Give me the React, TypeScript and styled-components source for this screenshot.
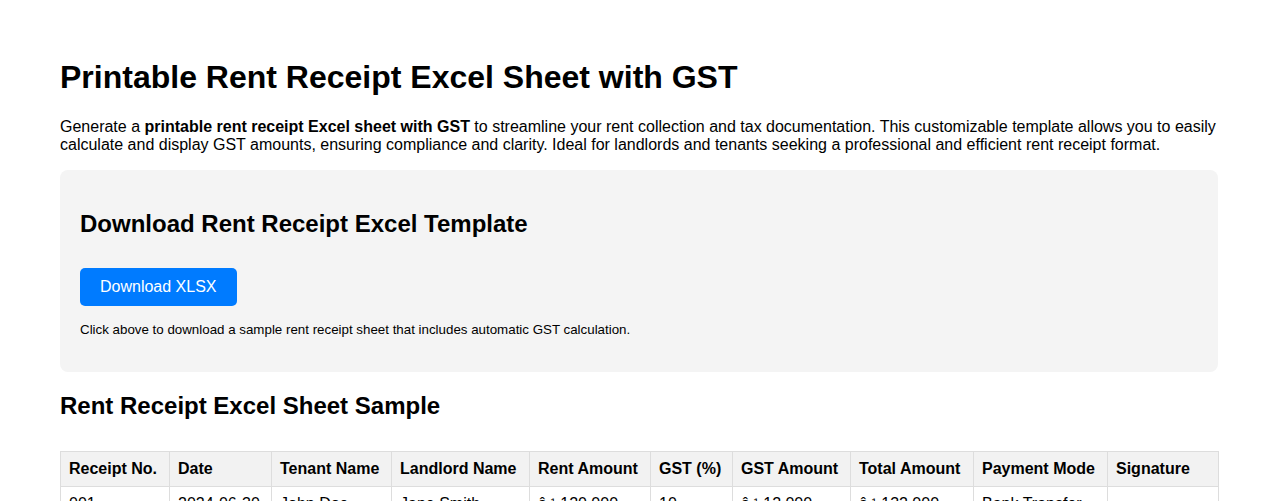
import React from "react";
import styled, { createGlobalStyle } from "styled-components";

const GlobalStyle = createGlobalStyle`
	body {
		margin: 0;
		background: #fff;
		color: #000;
		font-family: "Liberation Sans", Arial, sans-serif;
	}
`;

const Page = styled.div`
	padding: 38px 60px 40px;
`;

const Title = styled.h1`
	font-size: 32px;
	font-weight: bold;
	margin: 21.44px 0;
`;

const Intro = styled.p`
	font-size: 16px;
	margin: 16px 0;
`;

const DownloadBox = styled.section`
	background-color: #f4f4f4;
	border-radius: 8px;
	padding: 20px;
`;

const BoxTitle = styled.h2`
	font-size: 24px;
	font-weight: bold;
	margin: 19.92px 0;
`;

const SectionTitle = styled(BoxTitle)`
	margin-bottom: 31px;
`;

const DownloadButton = styled.a`
	display: inline-block;
	margin-top: 10px;
	padding: 10px 20px;
	background-color: #007bff;
	color: #fff;
	font-size: 16px;
	text-decoration: none;
	border-radius: 5px;
	cursor: pointer;
`;

const Note = styled.p`
	font-size: 13.33px;
	margin: 16px 0 15px;
`;

const Table = styled.table`
	width: 100%;
	border-collapse: collapse;
	table-layout: fixed;
	font-size: 16px;
`;

const Col = styled.col<{ $w: number }>`
	width: ${({ $w }) => $w}px;
`;

const Th = styled.th`
	background-color: #f2f2f2;
	border: 1px solid #ddd;
	padding: 8px;
	text-align: left;
	font-weight: bold;
	white-space: nowrap;
`;

const Td = styled.td`
	border: 1px solid #ddd;
	padding: 8px;
	text-align: left;
	white-space: nowrap;
`;

const columns = [
	{ label: "Receipt No.", w: 109 },
	{ label: "Date", w: 102 },
	{ label: "Tenant Name", w: 120 },
	{ label: "Landlord Name", w: 138 },
	{ label: "Rent Amount", w: 121 },
	{ label: "GST (%)", w: 82 },
	{ label: "GST Amount", w: 118 },
	{ label: "Total Amount", w: 123 },
	{ label: "Payment Mode", w: 134 },
	{ label: "Signature", w: 111 },
];

const rows = [
	["001", "2024-06-30", "John Doe", "Jane Smith", "â‚¹ 120,000", "10", "â‚¹ 12,000", "â‚¹ 132,000", "Bank Transfer", ""],
	["002", "2024-07-31", "John Doe", "Jane Smith", "â‚¹ 120,000", "10", "â‚¹ 12,000", "â‚¹ 132,000", "Bank Transfer", ""],
];

const App: React.FC = () => {
	return (
		<Page>
			<GlobalStyle />
			<Title>Printable Rent Receipt Excel Sheet with GST</Title>
			<Intro>
				Generate a <strong>printable rent receipt Excel sheet with GST</strong> to streamline your rent
				collection and tax documentation. This customizable template allows you to easily calculate and display
				GST amounts, ensuring compliance and clarity. Ideal for landlords and tenants seeking a professional and
				efficient rent receipt format.
			</Intro>
			<DownloadBox>
				<BoxTitle>Download Rent Receipt Excel Template</BoxTitle>
				<DownloadButton>Download XLSX</DownloadButton>
				<Note>Click above to download a sample rent receipt sheet that includes automatic GST calculation.</Note>
			</DownloadBox>
			<SectionTitle>Rent Receipt Excel Sheet Sample</SectionTitle>
			<Table>
				<colgroup>
					{columns.map((c) => (
						<Col key={c.label} $w={c.w} />
					))}
				</colgroup>
				<thead>
					<tr>
						{columns.map((c) => (
							<Th key={c.label}>{c.label}</Th>
						))}
					</tr>
				</thead>
				<tbody>
					{rows.map((r, i) => (
						<tr key={i}>
							{r.map((cell, j) => (
								<Td key={j}>{cell}</Td>
							))}
						</tr>
					))}
				</tbody>
			</Table>
		</Page>
	);
};

export default App;
